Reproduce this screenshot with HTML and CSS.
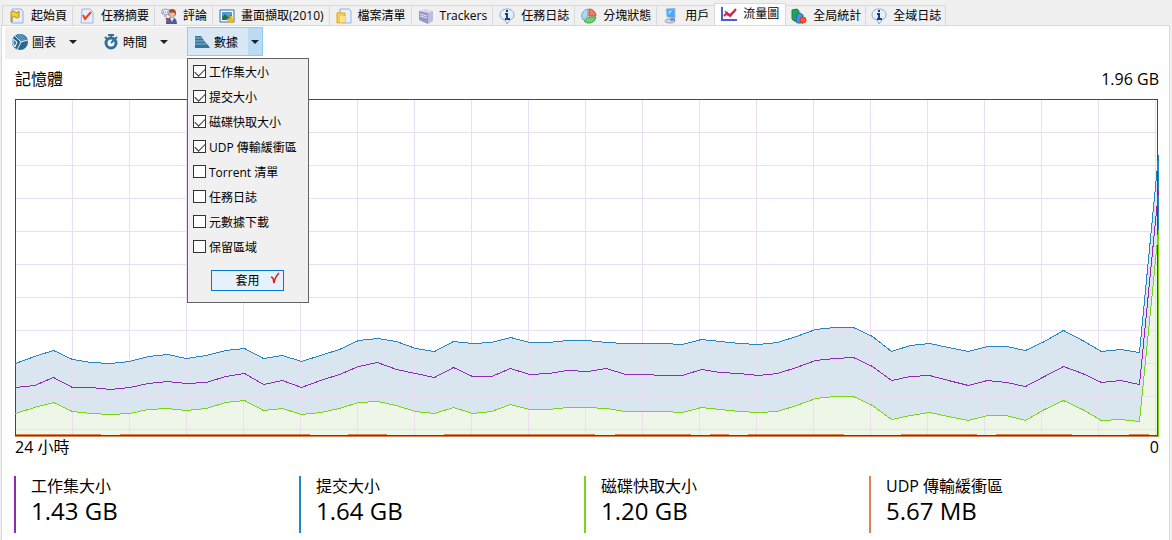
FILE: index.html
```
<!DOCTYPE html>
<html lang="zh-Hant">
<head>
   <meta charset="UTF-8">
   <meta name="viewport" content="width=device-width, initial-scale=1.0">
   <title>流量圖</title>
   <link rel="stylesheet" href="styles.css">
</head>
<body>
   <nav class="tabs">
      <a class="tab" href="#start">
         <svg class="icon" viewBox="0 0 16 16"><path d="M3 1h9l2 2v12H3z" fill="#e4eefb" stroke="#8fb0dc"/><path d="M2 4q2-2 4 0t4-1v6q-2 2-4 0t-3 1v4H2z" fill="#f5ce3e" stroke="#b98a14"/></svg>
         起始頁
      </a>
      <a class="tab" href="#summary">
         <svg class="icon" viewBox="0 0 16 16"><path d="M3 1h8l3 3v11H2z" fill="#e8effb" stroke="#9ab4e0"/><path d="M4 7l2 4 6-7" fill="none" stroke="#f04020" stroke-width="2"/></svg>
         任務摘要
      </a>
      <a class="tab" href="#comments">
         <svg class="icon" viewBox="0 0 16 16"><path d="M5 16q-1-6 6-7 5 1 5 7z" fill="#3465a8"/><path d="M9 10l2 4 2-4z" fill="#dceaf8"/><circle cx="11" cy="5" r="4" fill="#9a5530"/><path d="M8 5q3-1 6 0 0 4-3 5-3-1-3-5z" fill="#f0b98c"/><path d="M1 2q4-2 7 0v4H6L4 9V6H1z" fill="#eef1fc" stroke="#8c98c0"/><path d="M2 4h5" stroke="#5d6cab" stroke-dasharray="1 1"/><path d="M5 10l5 5" stroke="#b0405c" stroke-width="2"/></svg>
         評論
      </a>
      <a class="tab" href="#screenshots">
         <svg class="icon" viewBox="0 0 16 16"><path d="M1 2h14v12H1z" fill="#fff" stroke="#33689a"/><path d="M3 4h10v8H3z" fill="#4f9fd4"/><path d="M3 9l3-3 3 3 4-2v5H3z" fill="#26704e"/><path d="M12 8v7M8 12h7" stroke="#edb72c" stroke-width="3"/></svg>
         畫面擷取(2010)
      </a>
      <a class="tab" href="#files">
         <svg class="icon" viewBox="0 0 16 16"><path d="M4 1h9l2 2v12H4z" fill="#e8f0fc" stroke="#91b2de"/><path d="M1 5l3-1 1 1h4v9l-8 1z" fill="#f8cc50" stroke="#dba72a"/><path d="M4 8h5v6l-5 1z" fill="#ffe38b"/></svg>
         檔案清單
      </a>
      <a class="tab" href="#trackers">
         <svg class="icon" viewBox="0 0 16 16"><path d="M1 3l6-2 8 2-5 2z" fill="#d6d6f0"/><path d="M1 3l9 2v11l-9-4z" fill="#9696c4"/><path d="M10 5l5-2v10l-5 3z" fill="#bcbce0"/><path d="M2 6l7 2M2 8l7 2" stroke="#e4e4fa"/></svg>
         Trackers
      </a>
      <a class="tab" href="#log">
         <svg class="icon" viewBox="0 0 16 16"><path d="M8 1c4 0 7 2 7 6 0 3-2 4-4 5l-3 4-2-4c-3-1-5-2-5-5 0-4 3-6 7-6z" fill="#e4f1fc" stroke="#8ea9c4"/><path d="M8 2v2M6 6h2v5M6 11h5" fill="none" stroke="#173d99" stroke-width="2"/></svg>
         任務日誌
      </a>
      <a class="tab" href="#pieces">
         <svg class="icon" viewBox="0 0 16 16"><path d="M7 8V1A7 7 0 0 0 2 12z" fill="#a9d9f4" stroke="#60a9d2"/><path d="M8 8V1a7 7 0 0 1 7 7z" fill="#f27b5b" stroke="#d94e32"/><path d="M8 9h7A7 7 0 0 1 3 13z" fill="#71cf76" stroke="#38a84c"/></svg>
         分塊狀態
      </a>
      <a class="tab" href="#peers">
         <svg class="icon" viewBox="0 0 16 16"><ellipse cx="7" cy="13" rx="5" ry="2" fill="#d8d8ee" stroke="#9696b8"/><path d="M8 9h4v4H7z" fill="#8787b8"/><path d="M3 1l9-1v10l-8-1z" fill="#4ba6ee" stroke="#9cc4e4"/><path d="M5 3l5-1-4 5z" fill="#8fd4ff"/></svg>
         用戶
      </a>
      <a class="tab active" href="#traffic" aria-current="page">
         <svg class="icon" viewBox="0 0 16 16"><path d="M1 1v13h15" fill="none" stroke="#4a5bd4" stroke-width="2"/><path d="M4 5l3 4 3-1 4-3" fill="none" stroke="#28c828" stroke-width="2"/><path d="M3 10l3-3 3 3 6-7" fill="none" stroke="#e01850" stroke-width="2"/></svg>
         流量圖
      </a>
      <a class="tab" href="#stats">
         <svg class="icon" viewBox="0 0 16 16"><path d="M1 2l5-1 2 2v10H3l-2-2z" fill="#20a557" stroke="#16854a"/><path d="M6 6l3-1 3 2v8H7l-2-1z" fill="#4690e2" stroke="#2768ba"/><circle cx="12" cy="12" r="3" fill="#f45a2c" stroke="#dc3b16"/></svg>
         全局統計
      </a>
      <a class="tab" href="#global-log">
         <svg class="icon" viewBox="0 0 16 16"><path d="M8 1c4 0 7 2 7 6 0 3-2 4-4 5l-3 4-2-4c-3-1-5-2-5-5 0-4 3-6 7-6z" fill="#e4f1fc" stroke="#8ea9c4"/><path d="M8 2v2M6 6h2v5M6 11h5" fill="none" stroke="#173d99" stroke-width="2"/></svg>
         全域日誌
      </a>
   </nav>

   <main class="panel">
      <div class="toolbar">
         <button class="tool" type="button">
            <svg class="icon" viewBox="0 0 16 16"><circle cx="8" cy="8" r="8" fill="#2c678e"/><path d="M4 1q7-3 11 5l-6 2z" fill="#5593b6"/><path d="M3 2l6 6 7-2M9 8l-4 8" fill="none" stroke="#e4eef4"/><path d="M1 5l4 3-2 5q-3-3-2-8z" fill="#3a7ca5" stroke="#fff"/></svg>
            圖表
            <span class="arrow"></span>
         </button>
         <button class="tool" type="button">
            <svg class="icon" viewBox="0 0 16 16"><circle cx="8" cy="9" r="5" fill="#fff" stroke="#2f6f99" stroke-width="3"/><path d="M8 0v3M5 1h6M2 3l2 2M14 3l-2 2M8 9l3-3" stroke="#2f6f99" stroke-width="2"/></svg>
            時間
            <span class="arrow"></span>
         </button>
         <div class="dropdown">
            <button class="tool open" type="button" aria-expanded="true">
               <svg class="icon" viewBox="0 0 16 16"><path d="M1 2h6l2 3 2 3 3 3 2 3H1z" fill="#36749b"/><path d="M1 4h7M1 7h9M1 10h11" stroke="#8fbad2"/></svg>
               數據
               <span class="arrow"></span>
            </button>
            <form class="menu">
               <label class="option"><input type="checkbox" checked>工作集大小</label>
               <label class="option"><input type="checkbox" checked>提交大小</label>
               <label class="option"><input type="checkbox" checked>磁碟快取大小</label>
               <label class="option"><input type="checkbox" checked>UDP 傳輸緩衝區</label>
               <label class="option"><input type="checkbox">Torrent 清單</label>
               <label class="option"><input type="checkbox">任務日誌</label>
               <label class="option"><input type="checkbox">元數據下載</label>
               <label class="option"><input type="checkbox">保留區域</label>
               <button class="apply" type="button">
                  套用
                  <svg class="tick" viewBox="0 0 10 12"><path d="M1 5l2 1 1 5q1-6 5-10" fill="none" stroke="#f01414" stroke-width="1.500"/></svg>
               </button>
            </form>
         </div>
      </div>

      <div class="chart-row chart-title">
         <span>記憶體</span>
         <span>1.96 GB</span>
      </div>
      <svg class="chart" viewBox="15 99 1144 338" preserveAspectRatio="none">
         <defs>
            <pattern id="grid" x="15" y="99" width="57" height="33" patternUnits="userSpaceOnUse">
               <path d="M0 0h57v1H0zM0 0h1v33H0z" fill="#ecdef2"/>
            </pattern>
         </defs>
         <polygon class="area-commit" points="15,363 34,356 53,350 72,359 91,362 110,363 129,361 148,356 167,354 186,358 206,355 225,350 244,348 263,358 282,355 301,361 320,355 339,349 358,340 377,338 396,341 415,348 434,351 453,341 472,343 491,342 510,337 529,342 548,342 567,340 587,340 606,342 625,343 644,343 663,343 682,344 701,339 720,341 739,343 758,344 777,342 796,336 815,329 834,327 853,327 872,336 891,351 910,345 929,343 948,347 968,351 987,346 1006,346 1025,350 1044,341 1063,330 1082,340 1101,351 1120,349 1139,352 1158,155 1158,436 15,436"/>
         <polygon class="area-cache" points="15,413 34,407 53,402 72,411 91,413 110,414 129,413 148,409 167,408 186,410 206,408 225,402 244,400 263,410 282,408 301,414 320,412 339,408 358,402 377,401 396,405 415,411 434,413 453,407 472,413 491,411 510,404 529,409 548,409 567,407 587,407 606,408 625,411 644,411 663,411 682,412 701,407 720,409 739,411 758,412 777,411 796,405 815,398 834,396 853,396 872,405 891,419 910,415 929,412 948,416 968,420 987,415 1006,415 1025,420 1044,409 1063,400 1082,409 1101,420 1120,419 1139,421 1158,230 1158,436 15,436"/>
         <rect x="15" y="99" width="1143" height="337" fill="url(#grid)"/>
         <path class="line udp" d="M15 434.500h86M120 434.500h190M348 434.500h39M444 434.500h151M615 434.500h76M710 434.500h19M748 434.500h96M901 434.500h76M996 434.500h76M1129 434.500h20M15 436.500h1144"/>
         <rect class="frame" x="15.500" y="99.500" width="1142" height="336"/>
         <g transform="translate(0.500 0.500)">
            <polyline class="line commit" points="15,363 34,356 53,350 72,359 91,362 110,363 129,361 148,356 167,354 186,358 206,355 225,350 244,348 263,358 282,355 301,361 320,355 339,349 358,340 377,338 396,341 415,348 434,351 453,341 472,343 491,342 510,337 529,342 548,342 567,340 587,340 606,342 625,343 644,343 663,343 682,344 701,339 720,341 739,343 758,344 777,342 796,336 815,329 834,327 853,327 872,336 891,351 910,345 929,343 948,347 968,351 987,346 1006,346 1025,350 1044,341 1063,330 1082,340 1101,351 1120,349 1139,352 1158,155 1158,230"/>
            <polyline class="line working" points="15,387 34,385 53,377 72,387 91,387 110,389 129,387 148,383 167,381 186,383 206,382 225,376 244,373 263,384 282,380 301,387 320,380 339,374 358,366 377,362 396,369 415,373 434,377 453,367 472,376 491,376 510,368 529,374 548,373 567,370 587,371 606,368 625,374 644,374 663,375 682,375 701,369 720,372 739,373 758,375 777,373 796,367 815,360 834,358 853,357 872,366 891,380 910,376 929,375 948,380 968,385 987,380 1006,382 1025,386 1044,376 1063,366 1082,373 1101,382 1120,380 1139,384 1158,190"/>
            <polyline class="line cache" points="15,413 34,407 53,402 72,411 91,413 110,414 129,413 148,409 167,408 186,410 206,408 225,402 244,400 263,410 282,408 301,414 320,412 339,408 358,402 377,401 396,405 415,411 434,413 453,407 472,413 491,411 510,404 529,409 548,409 567,407 587,407 606,408 625,411 644,411 663,411 682,412 701,407 720,409 739,411 758,412 777,411 796,405 815,398 834,396 853,396 872,405 891,419 910,415 929,412 948,416 968,420 987,415 1006,415 1025,420 1044,409 1063,400 1082,409 1101,420 1120,419 1139,421 1158,230 1158,436"/>
         </g>
      </svg>
      <div class="chart-row">
         <span>24 小時</span>
         <span>0</span>
      </div>

      <dl class="legend">
         <div class="stat stat-working">
            <dt>工作集大小</dt>
            <dd>1.43 GB</dd>
         </div>
         <div class="stat stat-commit">
            <dt>提交大小</dt>
            <dd>1.64 GB</dd>
         </div>
         <div class="stat stat-cache">
            <dt>磁碟快取大小</dt>
            <dd>1.20 GB</dd>
         </div>
         <div class="stat stat-udp">
            <dt>UDP 傳輸緩衝區</dt>
            <dd>5.67 MB</dd>
         </div>
      </dl>
   </main>
</body>
</html>
```
FILE: styles.css
```
* {
   box-sizing: border-box;
}
body {
   display: flex;
   flex-direction: column;
   min-height: 100vh;
   margin: 0;
   background-color: #f0f0f0;
   color: #000;
   font-family: "Open Sans", "Noto Sans CJK TC", sans-serif;
   font-size: 12px;
}
button {
   font: inherit;
   color: inherit;
}
.icon {
   flex: none;
   width: 16px;
   height: 16px;
}

/* tabs */
.tabs {
   display: flex;
   align-items: flex-end;
   height: 25px;
   padding-left: 2px;
}
.tab {
   display: flex;
   align-items: center;
   gap: 6px;
   height: 20px;
   padding: 0 5px 0 6px;
   border-top: 1px solid #d9d9d9;
   border-left: 1px solid #d9d9d9;
   color: #000;
   line-height: 16px;
   text-decoration: none;
   white-space: nowrap;
}
.tab:last-child {
   border-right: 1px solid #d9d9d9;
}
.tab.active {
   height: 23px;
   margin-bottom: -1px;
   padding: 0 6px 2px;
   border-right: 1px solid #d9d9d9;
   background-color: #fff;
}
.tab.active ~ .tab {
   padding: 0 4px 0 5px;
}
.tab.active + .tab {
   border-left: none;
}

/* panel */
.panel {
   flex: 1;
   margin: 0 2px 0 1px;
   padding: 1px 10px 0 13px;
   border: 1px solid #d9d9d9;
   border-bottom: none;
   background-color: #fff;
}

/* toolbar */
.toolbar {
   display: flex;
   width: 182px;
   height: 32px;
   margin-left: -10px;
   background-color: #f0f0f0;
}
.tool {
   display: flex;
   flex: none;
   align-items: center;
   gap: 4px;
   width: 91px;
   height: 29px;
   padding: 0 7px;
   border: none;
   background: none;
   white-space: nowrap;
}
.arrow {
   width: 0;
   margin-left: 9px;
   border: 4px solid transparent;
   border-top-color: #222;
   border-bottom: none;
}
.dropdown {
   position: relative;
}
.tool.open {
   width: 76px;
   padding: 0 3px 0 6px;
   border: 1px solid #90c8f6;
   background: linear-gradient(to right, #d9e8f5 60px, #b9dbf5 60px);
}
.menu {
   position: absolute;
   top: 31px;
   left: 0;
   display: flex;
   flex-direction: column;
   width: 122px;
   height: 245px;
   padding: 0 0 0 5px;
   border: 1px solid #646464;
   background-color: #f0f0f0;
}
.option {
   display: flex;
   align-items: center;
   gap: 3px;
   height: 25px;
   white-space: nowrap;
}
.option input {
   appearance: none;
   width: 13px;
   height: 13px;
   margin: 0;
   border: 1px solid #333;
   background-color: #fff;
}
.option input:checked::before {
   content: "";
   display: block;
   width: 9px;
   height: 5px;
   margin: 2px 1px;
   border: solid #333;
   border-width: 0 0 1px 1px;
   transform: rotate(-45deg);
}
.apply {
   position: relative;
   width: 73px;
   height: 21px;
   margin: 11px 0 0 18px;
   padding: 0;
   border: 1px solid #0078d7;
   background-color: #e5f1fb;
   line-height: 18px;
}
.tick {
   position: absolute;
   top: 1px;
   right: 3px;
   width: 10px;
   height: 12px;
}

/* chart */
.chart-row {
   display: flex;
   justify-content: space-between;
   font-size: 16px;
   line-height: 20px;
}
.chart-title {
   padding: 10px 0;
}
.chart {
   display: block;
   width: 100%;
   height: 338px;
   shape-rendering: crispEdges;
}
.area-commit {
   fill: #d9e6f0;
}
.area-cache {
   fill: #eef6e8;
}
.frame,
.line {
   fill: none;
   stroke-width: 1px;
}
.frame {
   stroke: #8b12ae;
}
.working {
   stroke: #9528b4;
}
.commit {
   stroke: #2586c0;
}
.cache {
   stroke: #78d616;
}
.udp {
   stroke: #d88454;
}

/* totals */
.legend {
   display: grid;
   grid-template-columns: repeat(4, 1fr);
   margin: 19px 5px 0 -1px;
}
.stat {
   height: 57px;
   padding-left: 15px;
   border-left: 2px solid;
}
.stat dt {
   color: #000;
   font-size: 16px;
   line-height: 20px;
}
.stat dd {
   margin: 0;
   color: #000;
   font-size: 24px;
   line-height: 30px;
}
.stat-working {
   border-color: #9528b4;
}
.stat-commit {
   border-color: #2586c0;
}
.stat-cache {
   border-color: #78d616;
}
.stat-udp {
   border-color: #d88454;
}
```
